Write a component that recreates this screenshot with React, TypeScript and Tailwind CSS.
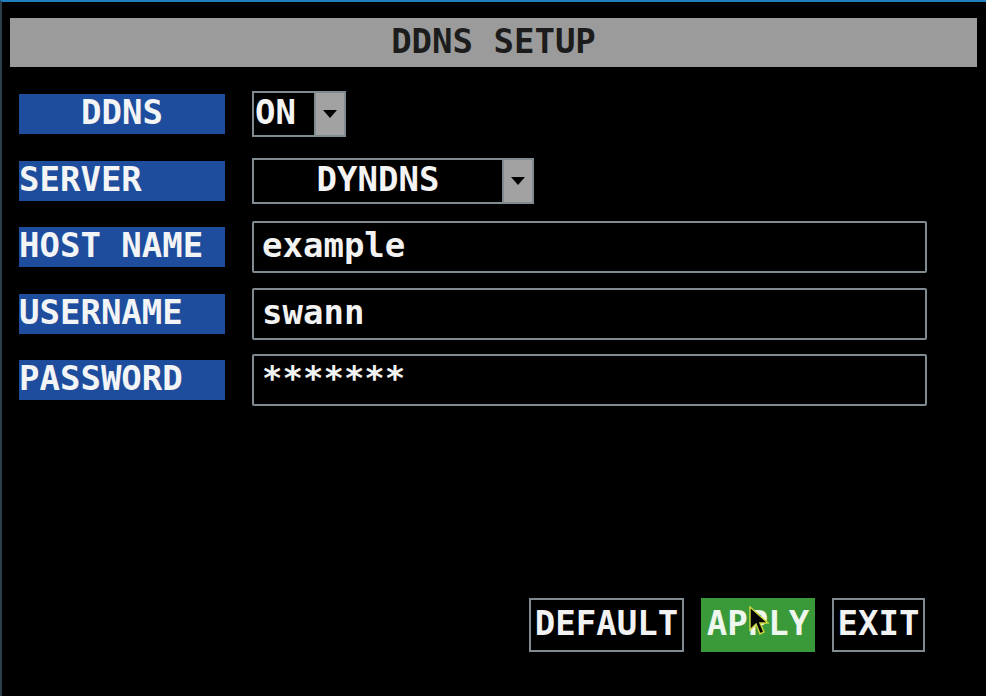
import React from "react";

type Row = {
  label: string;
  center?: boolean;
  kind: "select" | "input";
  value: string;
  width?: string;
};

const rows: Row[] = [
  { label: "DDNS", center: true, kind: "select", value: "ON", width: "w-[94px]" },
  { label: "SERVER", kind: "select", value: "DYNDNS", width: "w-[282px]" },
  { label: "HOST NAME", kind: "input", value: "example" },
  { label: "USERNAME", kind: "input", value: "swann" },
  { label: "PASSWORD", kind: "input", value: "*******" },
];

const Arrow = () => (
  <svg width="14" height="8" viewBox="0 0 14 8">
    <path d="M0 0 L14 0 L7 8 Z" fill="#000" />
  </svg>
);

const Cursor = () => (
  <svg width="20" height="32" viewBox="0 0 20 32" className="absolute left-[48px] top-[8px]">
    <path d="M1 1 L1 24 L7 18 L11 28 L15 26 L11 17 L19 17 Z" fill="#050505" stroke="#c9d63a" strokeWidth="1.5" />
  </svg>
);

const App: React.FC = () => {
  return (
    <div className="w-[986px] h-[696px] bg-black border-t-2 border-t-[#1f7fc1] border-l-2 border-l-[#2c3f4c] flex flex-col font-['DejaVu_Sans_Mono','Liberation_Mono',monospace] font-bold text-[34px] leading-none">
      <div className="pt-4 pl-2">
        <div className="w-[967px] h-[49px] bg-[#9b9b9b] flex items-center justify-center pb-1 text-[#1c1c1c]">
          DDNS SETUP
        </div>
      </div>

      <div className="mt-[14px] pl-[17px] flex flex-col">
        {rows.map((r) => (
          <div key={r.label} className="h-[66.5px] flex items-center">
            <div
              className={`w-[206px] h-[40px] bg-[#1d4d9c] text-[#f2f4f6] flex items-center pb-1 whitespace-pre ${
                r.center ? "justify-center" : ""
              }`}
            >
              {r.label}
            </div>

            {r.kind === "select" ? (
              <div className={`ml-[27px] ${r.width} h-[46px] border-2 border-[#7f8b90] flex`}>
                <div
                  className={`flex-1 bg-black border-r-2 border-[#7f8b90] text-[#f4f4f4] flex items-center pb-1 ${
                    r.center ? "pl-[1px]" : "justify-center"
                  }`}
                >
                  {r.value}
                </div>
                <div className="w-[28px] bg-[#a2a2a2] flex items-center justify-center">
                  <Arrow />
                </div>
              </div>
            ) : (
              <div className="ml-[27px] w-[675px] h-[52px] border-2 border-[#7f8b90] rounded-[2px] flex items-center pl-2 pb-1 text-[#f2f2f2]">
                {r.value}
              </div>
            )}
          </div>
        ))}
      </div>

      <div className="mt-[184px] pr-[61px] flex justify-end gap-[17px]">
        <div className="w-[155px] h-[54px] border-2 border-[#7f8b90] flex items-center justify-center pb-1 text-[#f2f2f2]">
          DEFAULT
        </div>
        <div className="relative w-[114px] h-[54px] bg-[#3a9a3a] flex items-center justify-center pb-1 text-[#eef6ee]">
          APPLY
          <Cursor />
        </div>
        <div className="w-[93px] h-[54px] border-2 border-[#7f8b90] flex items-center justify-center pb-1 text-[#f2f2f2]">
          EXIT
        </div>
      </div>
    </div>
  );
};

export default App;
